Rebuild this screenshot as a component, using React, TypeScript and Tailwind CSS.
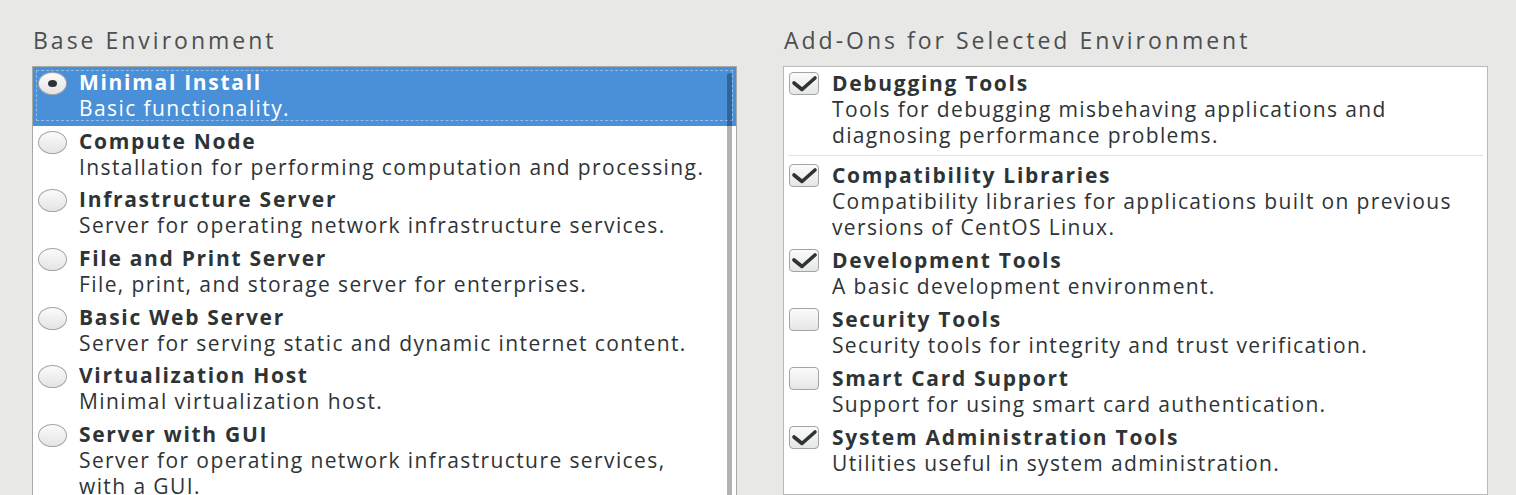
import React from "react"

const font = { fontFamily: '"Open Sans", "Noto Sans", sans-serif' }

const environments = [
  { title: "Minimal Install", desc: ["Basic functionality."] },
  { title: "Compute Node", desc: ["Installation for performing computation and processing."] },
  { title: "Infrastructure Server", desc: ["Server for operating network infrastructure services."] },
  { title: "File and Print Server", desc: ["File, print, and storage server for enterprises."] },
  { title: "Basic Web Server", desc: ["Server for serving static and dynamic internet content."] },
  { title: "Virtualization Host", desc: ["Minimal virtualization host."] },
  { title: "Server with GUI", desc: ["Server for operating network infrastructure services,", "with a GUI."] },
]

const addons = [
  { title: "Debugging Tools", desc: ["Tools for debugging misbehaving applications and", "diagnosing performance problems."], checked: true },
  { title: "Compatibility Libraries", desc: ["Compatibility libraries for applications built on previous", "versions of CentOS Linux."], checked: true },
  { title: "Development Tools", desc: ["A basic development environment."], checked: true },
  { title: "Security Tools", desc: ["Security tools for integrity and trust verification."], checked: false },
  { title: "Smart Card Support", desc: ["Support for using smart card authentication."], checked: false },
  { title: "System Administration Tools", desc: ["Utilities useful in system administration."], checked: true },
]

function Radio({ selected }: { selected: boolean }) {
  return (
    <div className="mt-[3px] ml-[5px] w-[29px] h-[23px] shrink-0 rounded-[50%] border border-[#a4a4a4] bg-gradient-to-b from-[#fbfbfb] to-[#e4e4e4] flex items-center justify-center">
      {selected && <div className="w-[9px] h-[7px] rounded-[50%] bg-[#2e3436]" />}
    </div>
  )
}

function Checkbox({ checked }: { checked: boolean }) {
  return (
    <div className="mt-[2px] ml-[5px] w-[30px] h-[23px] shrink-0 rounded-[4px] border border-[#a4a4a4] bg-gradient-to-b from-[#fbfbfb] to-[#e6e6e6]">
      {checked && (
        <svg width="30" height="23" viewBox="0 0 30 23" className="-ml-px -mt-px">
          <path d="M5 11 L13 17.5 L26 6" fill="none" stroke="#2e3436" strokeWidth="3.6" strokeLinecap="round" strokeLinejoin="round" />
        </svg>
      )}
    </div>
  )
}

export default function App() {
  return (
    <div className="w-[1516px] h-[495px] overflow-hidden bg-[#e8e8e7] flex gap-[46px] pl-[32px] pt-[26px]" style={font}>
      {/* base environment */}
      <div className="w-[705px] shrink-0 flex flex-col">
        <div className="text-[23px] leading-[28px] tracking-[3px] text-[#4b4f50] pl-px mb-[12px]">Base Environment</div>
        <div className="relative h-[500px] border border-[#a9a9a7] bg-white">
          {environments.map((env, i) => {
            const sel = i === 0
            return (
              <div
                key={env.title}
                className={"relative flex gap-[12px] pt-[2px] pb-[4.67px] " + (sel ? "bg-[#4a90d9] text-white" : "text-[#2e3436]")}
              >
                {sel && <div className="absolute inset-x-[3px] top-[3px] bottom-[5px] border border-dashed border-white/40" />}
                <Radio selected={sel} />
                <div className="text-[21px] leading-[26px] tracking-[1.4px] whitespace-nowrap">
                  <div className="font-bold tracking-[1.7px]">{env.title}</div>
                  {env.desc.map((d) => (
                    <div key={d}>{d}</div>
                  ))}
                </div>
              </div>
            )
          })}
          <div className="absolute right-[4px] top-[6px] bottom-0 w-[5px] rounded-t-[3px] bg-black/30" />
        </div>
      </div>

      {/* add-ons */}
      <div className="w-[705px] shrink-0 flex flex-col">
        <div className="text-[23px] leading-[28px] tracking-[3px] text-[#4b4f50] pl-px mb-[12px]">Add-Ons for Selected Environment</div>
        <div className="h-[500px] border border-[#b9b9b7] bg-white">
          {addons.map((a, i) => (
            <React.Fragment key={a.title}>
              <div className="flex gap-[13px] pt-[2.5px] pb-[4.5px] text-[#2e3436]">
                <Checkbox checked={a.checked} />
                <div className="text-[21px] leading-[26px] tracking-[1.35px] whitespace-nowrap">
                  <div className="font-bold tracking-[1.7px]">{a.title}</div>
                  {a.desc.map((d) => (
                    <div key={d}>{d}</div>
                  ))}
                </div>
              </div>
              {i === 0 && <div className="mx-[4px] mt-[3px] mb-[3.5px] h-px bg-[#e2e2e0]" />}
            </React.Fragment>
          ))}
        </div>
      </div>
    </div>
  )
}
